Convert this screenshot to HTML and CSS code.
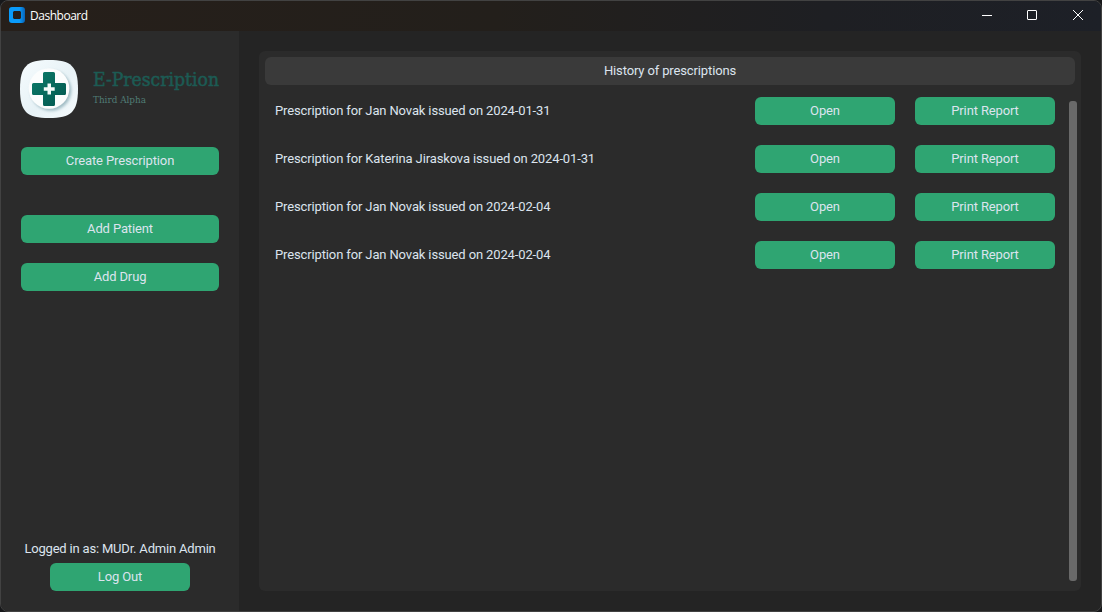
FILE: index.html
```html
<!DOCTYPE html>
<html lang="en">
<head>
<meta charset="utf-8">
<title>Dashboard</title>
<link rel="stylesheet" href="styles.css">
</head>
<body>
<div class="window">
  <header class="titlebar">
    <svg class="app-icon" width="16" height="16" viewBox="0 0 16 16">
      <defs><linearGradient id="edge"><stop offset=".65" stop-color="#0a9bfa"/><stop offset="1" stop-color="#0862b5"/></linearGradient></defs>
      <path fill="url(#edge)" fill-rule="evenodd" d="M3 0h10a3 3 0 0 1 3 3v10a3 3 0 0 1-3 3H3a3 3 0 0 1-3-3V3a3 3 0 0 1 3-3zM5 4L4 5v6l1 1h6l1-1V5l-1-1z"/>
    </svg>
    <span class="title">Dashboard</span>
    <svg class="controls" width="138" height="30" viewBox="0 0 138 30" fill="none" stroke="#fff">
      <path d="M19 14.500h10"/>
      <rect x="64.500" y="9.500" width="9" height="9" rx=".5"/>
      <path d="M110 9l10 10M120 9l-10 10"/>
    </svg>
  </header>
  <div class="body">
    <aside class="sidebar">
      <div class="brand">
        <svg width="58" height="58" viewBox="0 0 58 58">
          <defs>
            <linearGradient id="tile" x2="1" y2="1"><stop stop-color="#f6fcfe"/><stop offset=".55" stop-color="#e7f2f6"/><stop offset="1" stop-color="#f6fbfd"/></linearGradient>
            <linearGradient id="cross" x2="1" y2="1"><stop stop-color="#0b7b69"/><stop offset="1" stop-color="#035850"/></linearGradient>
            <filter id="shade" x="-20%" y="-20%" width="150%" height="150%"><feDropShadow dx="2" dy="2" stdDeviation="1.800" flood-color="#86a9b3" flood-opacity=".75"/></filter>
          </defs>
          <path fill="url(#tile)" d="M29 0C51 0 58 6 58 29S51 58 29 58 0 52 0 29 7 0 29 0z"/>
          <circle cx="29" cy="28.500" r="20.300" fill="#fbfdfd" filter="url(#shade)"/>
          <path fill="url(#cross)" d="M24.500 12h9a1.500 1.500 0 0 1 1.500 1.500V23h9.500a1.500 1.500 0 0 1 1.500 1.500v9a1.500 1.500 0 0 1-1.500 1.500H35v9.500a1.500 1.500 0 0 1-1.500 1.500h-9a1.500 1.500 0 0 1-1.500-1.500V35h-9.500a1.500 1.500 0 0 1-1.500-1.500v-9a1.500 1.500 0 0 1 1.500-1.500H23v-9.500a1.500 1.500 0 0 1 1.500-1.500z"/>
          <path fill="#f4fbf9" d="M27.500 23.500h3.500v3.700h3.700v3.500H31v3.700h-3.500v-3.700h-3.700v-3.500h3.700z"/>
        </svg>
        <svg class="wordmark" width="130" height="40" viewBox="0 0 130 40">
          <text class="name" x="0" y="17.500" textLength="126" lengthAdjust="spacingAndGlyphs">E-Prescription</text>
          <text class="edition" x="0" y="35" textLength="53" lengthAdjust="spacingAndGlyphs">Third Alpha</text>
        </svg>
      </div>
      <nav class="actions">
        <button class="btn create">Create Prescription</button>
        <button class="btn">Add Patient</button>
        <button class="btn">Add Drug</button>
      </nav>
      <div class="account">
        <span class="user">Logged in as: MUDr. Admin Admin</span>
        <button class="btn fixed">Log Out</button>
      </div>
    </aside>
    <main class="main">
      <section class="panel">
        <h1 class="heading">History of prescriptions</h1>
        <div class="scroll-area">
          <div class="rows">
            <div class="row"><span class="label">Prescription for Jan Novak issued on 2024-01-31</span><button class="btn fixed">Open</button><button class="btn fixed">Print Report</button></div>
            <div class="row"><span class="label">Prescription for Katerina Jiraskova issued on 2024-01-31</span><button class="btn fixed">Open</button><button class="btn fixed">Print Report</button></div>
            <div class="row"><span class="label">Prescription for Jan Novak issued on 2024-02-04</span><button class="btn fixed">Open</button><button class="btn fixed">Print Report</button></div>
            <div class="row"><span class="label">Prescription for Jan Novak issued on 2024-02-04</span><button class="btn fixed">Open</button><button class="btn fixed">Print Report</button></div>
          </div>
          <div class="scrollbar"></div>
        </div>
      </section>
    </main>
  </div>
</div>
</body>
</html>
```
FILE: styles.css
```css
* { box-sizing: border-box; }
body {
  margin: 0;
  background: #17181a;
  font: 13px/15px Roboto, sans-serif;
  letter-spacing: -0.13px;
  color: #dce4ee;
  overflow: hidden;
}
.window {
  width: 1102px;
  height: 612px;
  border: 1px solid #424242;
  border-radius: 8px;
  background: #242424;
  overflow: hidden;
  display: flex;
  flex-direction: column;
}
.titlebar {
  height: 30px;
  flex: none;
  display: flex;
  align-items: center;
  padding-left: 8px;
  background: linear-gradient(90deg, #261f1a, #231f1b 45%, #1e1f23 75%, #1d2027);
}
.app-icon { margin-top: -2px; }
.title {
  margin-left: 5px;
  font: 12px/16px "Open Sans", sans-serif;
  letter-spacing: -0.48px;
  color: #fff;
}
.controls { margin-left: auto; }
.body { flex: 1; display: flex; min-height: 0; }
.sidebar {
  width: 238px;
  flex: none;
  padding: 29px 20px 20px;
  background: #2b2b2b;
  display: flex;
  flex-direction: column;
}
.brand { display: flex; gap: 15px; height: 87px; margin-left: -1px; }
.brand svg { flex: none; }
.wordmark { margin-top: 8px; overflow: visible; letter-spacing: 0; }
.name { font: 18px "DejaVu Serif", serif; fill: #1c5b54; stroke: #1c5b54; stroke-width: .5px; }
.edition { font: 9.500px "DejaVu Serif", serif; fill: #507c75; }
.actions { display: flex; flex-direction: column; gap: 20px; }
.create { margin-bottom: 20px; }
.btn {
  height: 28px;
  padding: 0 0 2px;
  border: 0;
  border-radius: 6px;
  background: #2fa572;
  color: #dce4ee;
  font: inherit;
  letter-spacing: inherit;
}
.fixed { width: 140px; flex: none; }
.account {
  margin-top: auto;
  display: flex;
  flex-direction: column;
  align-items: center;
  gap: 7px;
  white-space: nowrap;
}
.user { letter-spacing: -0.19px; }
.main { flex: 1; padding: 20px; }
.panel {
  height: 540px;
  width: 822px;
  padding: 6px;
  border-radius: 6px;
  background: #2b2b2b;
}
.heading {
  margin: 0;
  height: 28px;
  border-radius: 6px;
  background: #3a3a3a;
  font: inherit;
  line-height: 27px;
  text-align: center;
}
.scroll-area { display: flex; justify-content: space-between; }
.rows {
  display: flex;
  flex-direction: column;
  gap: 20px;
  width: 790px;
  padding: 12px 0 0 10px;
}
.row { display: flex; gap: 20px; }
.label { flex: 1; line-height: 27px; }
.scrollbar {
  width: 8px;
  height: 480px;
  margin: 16px -2px 0 0;
  border-radius: 3px;
  background: #696969;
}
```
